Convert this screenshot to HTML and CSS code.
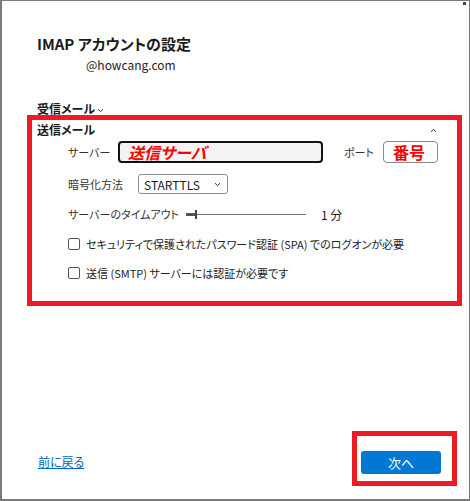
FILE: index.html
```html
<!DOCTYPE html>
<html lang="ja">
  <head>
    <meta charset="UTF-8" />
    <title>IMAP アカウントの設定</title>
    <link rel="stylesheet" href="styles.css">
  </head>
  <body>
    <div class="window">
      <span class="grip"></span>
      <header class="head">
        <h1>IMAP アカウントの設定</h1>
        <p class="email">@howcang.com</p>
      </header>

      <div class="toggle incoming">受信メール
        <svg class="chev" width="7" height="5" viewBox="0 0 7 5"><path d="M1 1.2 L3.5 3.6 L6 1.2" fill="none" stroke="#333" stroke-width="1"/></svg>
      </div>

      <section class="outgoing">
        <div class="toggle">
          <span>送信メール</span>
          <svg class="chev" width="7" height="5" viewBox="0 0 7 5"><path d="M1 3.8 L3.5 1.4 L6 3.8" fill="none" stroke="#333" stroke-width="1"/></svg>
        </div>

        <div class="row server-row">
          <span class="label server-label">サーバー</span>
          <div class="field server">送信サーバ</div>
          <span class="label port-label">ポート</span>
          <div class="field port">番号</div>
        </div>

        <div class="row enc-row">
          <span class="label enc-label">暗号化方法</span>
          <div class="select">STARTTLS
            <svg width="7" height="5" viewBox="0 0 7 5"><path d="M1 1.2 L3.5 3.6 L6 1.2" fill="none" stroke="#333" stroke-width="1"/></svg>
          </div>
        </div>

        <div class="row timeout">
          <span class="label timeout-label">サーバーのタイムアウト</span>
          <div class="slider"><span class="fill"></span><span class="thumb"></span></div>
          <span class="value">1 分</span>
        </div>

        <label class="check"><span class="box"></span>セキュリティで保護されたパスワード認証 (SPA) でのログオンが必要</label>
        <label class="check"><span class="box"></span>送信 (SMTP) サーバーには認証が必要です</label>
      </section>

      <footer class="foot">
        <a href="#" class="back">前に戻る</a>
        <div class="next-wrap">
          <button class="next">次へ</button>
        </div>
      </footer>
    </div>
  </body>
</html>
```

FILE: styles.css
```css
/* General */
body {
  margin: 0;
  font-family: "Noto Sans CJK JP", "Noto Sans", sans-serif;
  font-feature-settings: "palt";
  color: #1b1b1b;
  background: #ffffff;
}

.window {
  position: relative;
  box-sizing: border-box;
  width: 470px;
  height: 501px;
  border: 1px solid #7a7a7a;
  border-left-width: 2px;
  border-bottom-width: 2px;
  padding: 0 0 0 35px;
  display: flex;
  flex-direction: column;
}

.grip {
  position: absolute;
  top: 1px;
  right: 3px;
  width: 3px;
  height: 3px;
  background: #444;
}

/* Header */
.head h1 {
  margin: 33px 0 0;
  font-size: 15px;
  line-height: 20px;
  font-weight: bold;
}

.email {
  margin: 3px 0 0 49px;
  font-size: 12px;
  line-height: 16px;
  color: #222;
}

/* Sections */
.toggle {
  font-size: 12px;
  line-height: 16px;
  font-weight: bold;
  display: flex;
  align-items: center;
}

.incoming {
  margin-top: 28px;
}

.incoming .chev {
  margin: 2px 0 0 2px;
}

.outgoing {
  margin: -2px 0 0 -10px;
  width: 435px;
  box-sizing: border-box;
  border: 5px solid #ed1c24;
  padding: 2px 0 0 5px;
  height: 191px;
}

.outgoing .toggle {
  justify-content: space-between;
  padding-right: 20px;
}

.row {
  display: flex;
  align-items: center;
  margin-left: 31px;
  font-size: 11px;
}

.label {
  color: #333;
}

.server-row {
  margin-top: 3px;
  height: 22px;
}

.server-label {
  width: 50px;
}

.field {
  box-sizing: border-box;
  height: 22px;
  border-radius: 4px;
  color: #ff0000;
  font-weight: bold;
  font-size: 16px;
  line-height: 18px;
  padding-left: 8px;
}

.server {
  width: 205px;
  border: 2px solid #111;
  background: #f3f3f3;
  font-style: italic;
}

.port-label {
  width: 39px;
  margin-left: 21px;
}

.port {
  width: 55px;
  border: 1px solid #8a8a8a;
  line-height: 20px;
  padding-left: 9px;
}

.enc-row {
  margin-top: 11px;
}

.enc-label {
  width: 70px;
}

.select {
  box-sizing: border-box;
  width: 90px;
  height: 20px;
  border: 1px solid #8a8a8a;
  border-radius: 3px;
  display: flex;
  align-items: center;
  justify-content: space-between;
  padding: 0 6px 0 5px;
  font-size: 12px;
  color: #1b1b1b;
}

.timeout {
  margin-top: 10px;
  height: 20px;
}

.timeout-label {
  width: 118px;
}

.slider {
  position: relative;
  width: 120px;
  height: 1px;
  background: #767676;
}

.slider .fill {
  position: absolute;
  left: 0;
  top: -1px;
  width: 10px;
  height: 3px;
  background: #555;
}

.slider .thumb {
  position: absolute;
  left: 9px;
  top: -4px;
  width: 2px;
  height: 9px;
  background: #444;
}

.value {
  margin-left: 15px;
  font-size: 12px;
}

.check {
  display: flex;
  align-items: center;
  margin: 10px 0 0 31px;
  font-size: 11px;
  line-height: 20px;
  color: #222;
}

.check + .check {
  margin-top: 9px;
}

.box {
  box-sizing: border-box;
  width: 12px;
  height: 12px;
  border: 1px solid #555;
  border-radius: 2px;
  margin-right: 6px;
}

/* Footer */
.foot {
  margin-top: auto;
  margin-bottom: 13px;
  display: flex;
  align-items: center;
  justify-content: space-between;
  padding-right: 12px;
}

.back {
  color: #0067c0;
  font-size: 12px;
  margin: 6px 0 0 1px;
}

.next-wrap {
  border: 5px solid #ed1c24;
  padding: 13px 11px 7px 4px;
}

.next {
  width: 80px;
  height: 23px;
  border: none;
  border-radius: 3px;
  background: #0078d4;
  color: #ffffff;
  font-family: inherit;
  font-size: 13px;
}
```
